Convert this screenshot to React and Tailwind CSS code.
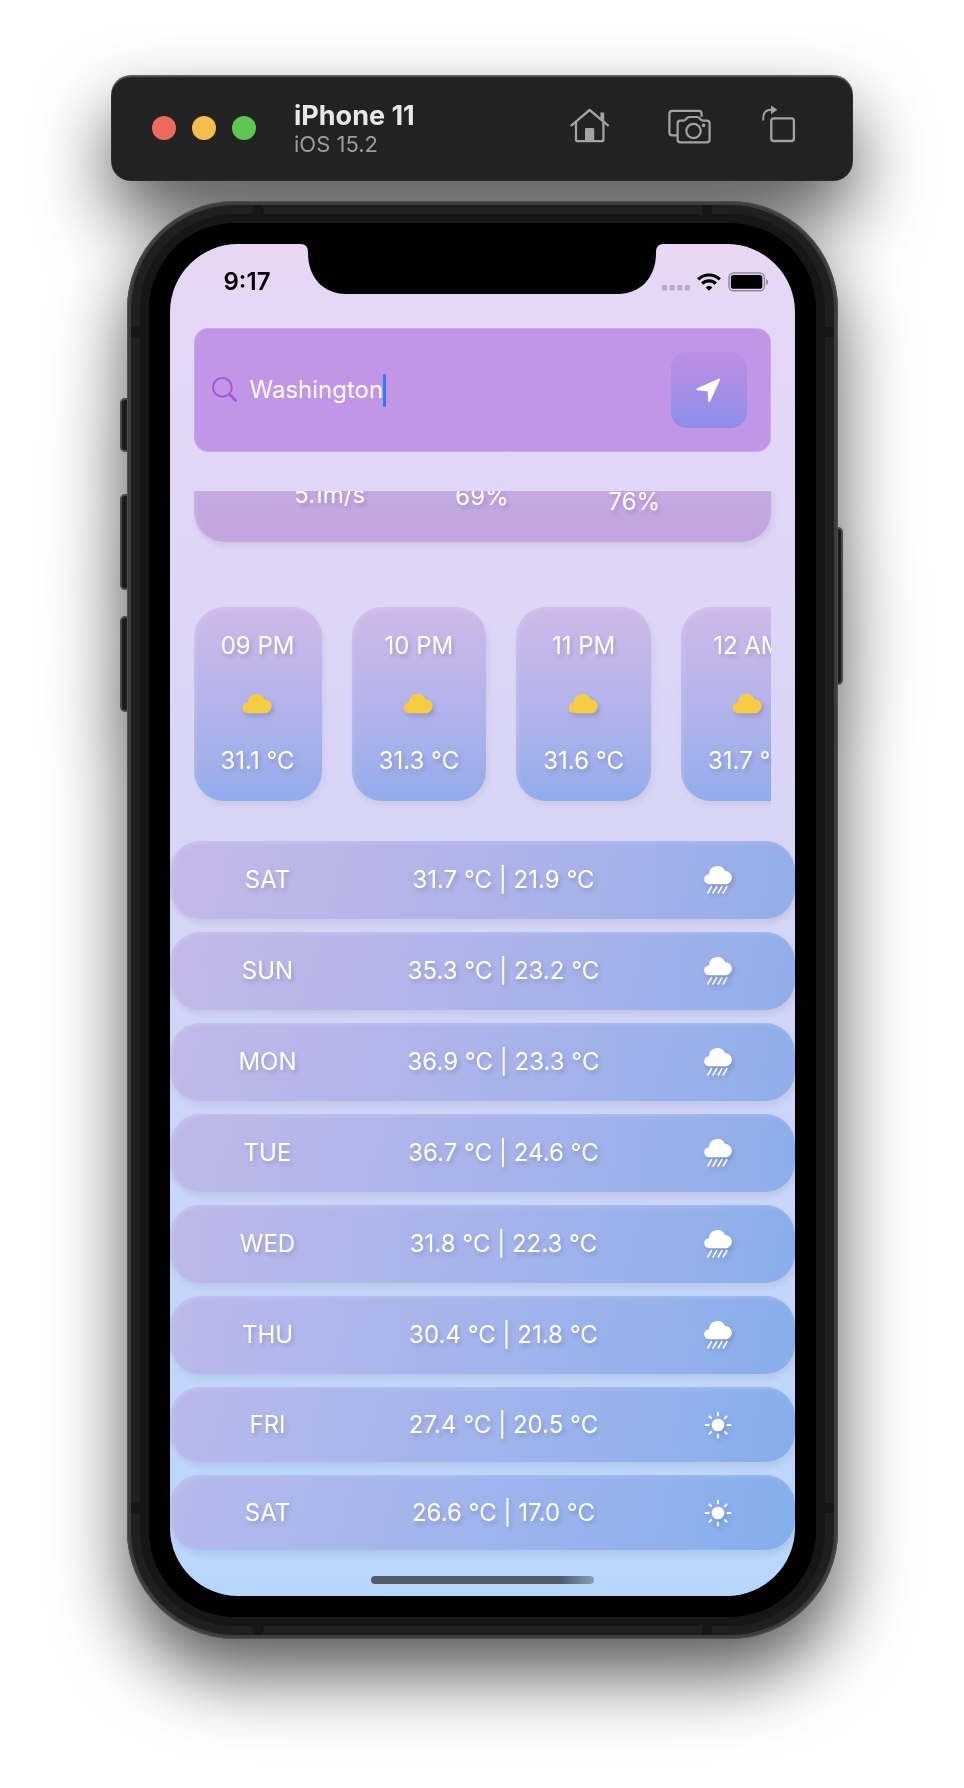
const HOURS = [
  { time: "09 PM", temp: "31.1 °C" },
  { time: "10 PM", temp: "31.3 °C" },
  { time: "11 PM", temp: "31.6 °C" },
  { time: "12 AM", temp: "31.7 °C" },
];

const DAYS = [
  { day: "SAT", high: "31.7 °C", low: "21.9 °C", rain: true },
  { day: "SUN", high: "35.3 °C", low: "23.2 °C", rain: true },
  { day: "MON", high: "36.9 °C", low: "23.3 °C", rain: true },
  { day: "TUE", high: "36.7 °C", low: "24.6 °C", rain: true },
  { day: "WED", high: "31.8 °C", low: "22.3 °C", rain: true },
  { day: "THU", high: "30.4 °C", low: "21.8 °C", rain: true },
  { day: "FRI", high: "27.4 °C", low: "20.5 °C", rain: false },
  { day: "SAT", high: "26.6 °C", low: "17.0 °C", rain: false },
];

const CLOUD =
  "M5.3 20.2A5.3 5.3 0 0 1 4.7 9.6A8.9 8.9 0 0 1 21.6 6.2A7.1 7.1 0 0 1 23.2 20.2Z";

function HomeIcon() {
  return (
    <svg className="block" width="40" height="40" viewBox="0 0 40 40" fill="none" stroke="#a3a3a3" strokeWidth="2.3" strokeLinecap="round" strokeLinejoin="round">
      <path d="M1.5 20.3L19.6 5L38 20.3" />
      <path d="M6 17V34.4Q6 36.2 7.8 36.2H31.6Q33.4 36.2 33.4 34.4V17" />
      <path d="M30.4 14V7.4H34.2V16.8Z" fill="#a3a3a3" stroke="none" />
      <rect x="15" y="23" width="9.2" height="13.5" rx="1" fill="#a3a3a3" stroke="none" />
    </svg>
  );
}

function CameraIcon() {
  return (
    <svg className="block" width="43" height="40" viewBox="0 0 43 40" fill="none" stroke="#a3a3a3" strokeWidth="2.2" strokeLinecap="round" strokeLinejoin="round">
      <path d="M33.6 11V8.6Q33.6 5.8 30.8 5.8H4.2Q1.4 5.8 1.4 8.6V27.6Q1.4 30.4 4.2 30.4H8" />
      <path d="M12.4 15.6H15.4Q16.6 15.6 17.4 14.8L19.4 12.8Q20.2 12 21.4 12H29Q30.2 12 31 12.8L33 14.8Q33.8 15.6 35 15.6H38.8Q41.6 15.6 41.6 18.4V34.6Q41.6 37.4 38.8 37.4H12.4Q9.6 37.4 9.6 34.6V18.4Q9.6 15.6 12.4 15.6Z" />
      <circle cx="25.5" cy="26" r="7.2" />
      <circle cx="35.6" cy="20.4" r="1.8" fill="#a3a3a3" stroke="none" />
    </svg>
  );
}

function RotateIcon() {
  return (
    <svg className="block" width="34" height="40" viewBox="0 0 34 40" fill="none" stroke="#a3a3a3" strokeWidth="2.3" strokeLinejoin="round">
      <path d="M1.2 15.6V13Q1.2 4.7 9.6 4.7" strokeWidth="1.9" />
      <path d="M9 0.4L15.4 4.8L9 9.2Z" fill="#a3a3a3" stroke="none" />
      <rect x="9.3" y="13.4" width="22.6" height="22.6" rx="2.6" />
    </svg>
  );
}

function CloudIcon() {
  return (
    <svg className="block [filter:drop-shadow(2px_3px_2px_rgba(0,0,0,0.15))]" width="30" height="21" viewBox="0 0 30 21" fill="#f6cc45">
      <path d={CLOUD} />
    </svg>
  );
}

function RainIcon() {
  return (
    <svg className="block [filter:drop-shadow(2px_3px_2px_rgba(0,0,0,0.15))]" width="30" height="30" viewBox="-1.5 0 30 30">
      <path d={CLOUD} fill="#fff" transform="scale(0.955)" />
      <path d="M7 21.6L3.3 28M12.2 21.6L8.5 28M17.4 21.6L13.7 28M22.4 21.6L18.7 28" stroke="#fff" strokeWidth="1.5" strokeLinecap="round" />
    </svg>
  );
}

function SunIcon() {
  return (
    <svg className="block [filter:drop-shadow(2px_3px_2px_rgba(0,0,0,0.15))]" width="28" height="28" viewBox="0 0 28 28" fill="#fff" stroke="#fff" strokeWidth="1.9" strokeLinecap="round">
      <circle cx="14" cy="14" r="6.3" stroke="none" />
      <path d="M14 1.6V4.6M14 23.4V26.4M1.6 14H4.6M23.4 14H26.4M5.4 5.4L7.2 7.2M20.8 20.8L22.6 22.6M5.4 22.6L7.2 20.8M20.8 7.2L22.6 5.4" />
    </svg>
  );
}

function Toolbar() {
  return (
    <header className="relative flex w-full max-w-[742px] items-center rounded-[20px] bg-[#222222] py-6 pr-[57px] pl-[41px] shadow-[inset_0_2px_1px_rgba(255,255,255,0.25),inset_0_0_1px_rgba(255,255,255,0.3)]">
      <div className="flex gap-4">
        <button type="button" aria-label="Close" className="size-6 rounded-full bg-[#ed6a5e]" />
        <button type="button" aria-label="Minimize" className="size-6 rounded-full bg-[#f4be4f]" />
        <button type="button" aria-label="Zoom" className="size-6 rounded-full bg-[#61c554]" />
      </div>
      <div className="ml-[38px] flex-1 pt-0.5">
        <h1 className="text-[27px] leading-[30px] font-bold text-[#e8e8e8]">iPhone 11</h1>
        <p className="text-[22px] leading-[26px] text-[#9c9c9c]">iOS 15.2</p>
      </div>
      <div className="flex gap-[51px] pb-1.5">
        <button type="button" aria-label="Home" className="w-[47px]"><HomeIcon /></button>
        <button type="button" aria-label="Screenshot"><CameraIcon /></button>
        <button type="button" aria-label="Rotate"><RotateIcon /></button>
      </div>
    </header>
  );
}

function StatusBar() {
  return (
    <div className="mb-2 flex h-[76px] items-center justify-between pr-[26px] pl-[54px]">
      <span className="text-2xl font-semibold text-black">9:17</span>
      <div className="flex h-5 items-end gap-[7px]">
        <svg className="mb-px block" width="28" height="6" viewBox="0 0 28 6" fill="#b8aac6">
          <rect x="0" width="5" height="5.4" rx="1.2" />
          <rect x="7.6" width="5" height="5.4" rx="1.2" />
          <rect x="15.2" width="5" height="5.4" rx="1.2" />
          <rect x="22.8" width="5" height="5.4" rx="1.2" />
        </svg>
        <svg className="mb-px block" width="24" height="18" viewBox="0 0 24 18" fill="none" stroke="#000" strokeWidth="3.2">
          <path d="M1.2 6.4A15.4 15.4 0 0 1 22.8 6.4" />
          <path d="M5.2 10.6A9.7 9.7 0 0 1 18.8 10.6" />
          <path d="M12 17.8L8.7 14.4A4.8 4.8 0 0 1 15.3 14.4Z" fill="#000" stroke="none" />
        </svg>
        <svg className="block" width="41" height="20" viewBox="0 0 41 20" fill="none">
          <rect x="1" y="1" width="35.4" height="17.8" rx="4.6" stroke="#8f8499" strokeWidth="1.4" />
          <rect x="2.9" y="3" width="31.4" height="13.8" rx="2.6" fill="#000" />
          <path d="M38.2 7V13Q40.2 12 40.2 10Q40.2 8 38.2 7Z" fill="#8f8499" />
        </svg>
      </div>
    </div>
  );
}

function SearchBox() {
  return (
    <div className="mx-6 flex items-center rounded-[14px] border border-[#cba6ea] bg-[#c296e6] py-[23px] pr-[23px] pl-[17px]">
      <svg className="mr-3 block shrink-0" width="26" height="26" viewBox="0 0 26 26" fill="none" stroke="#a557d9" strokeLinecap="round">
        <circle cx="10.4" cy="10.4" r="9.4" strokeWidth="2" />
        <path d="M17.6 17.6L23.6 23.6" strokeWidth="2.8" />
      </svg>
      <input
        aria-label="City"
        defaultValue="Washington"
        className="field-sizing-content min-w-0 bg-transparent text-2xl leading-8 text-white outline-none"
      />
      <span className="h-[33px] w-[3px] shrink-0 rounded-full bg-[#2f7bf6]" />
      <button
        type="button"
        aria-label="Use my location"
        className="ml-auto flex size-[76px] shrink-0 items-center justify-center rounded-[16px] bg-linear-to-b from-[#bd8ee2] to-[#8c8eeb]"
      >
        <svg className="block" width="25" height="25" viewBox="0 0 25 25" fill="#fff" stroke="#fff" strokeWidth="2" strokeLinejoin="round">
          <path d="M23 1.6L1.6 11.2L12.6 12.4L13.2 23Z" />
        </svg>
      </button>
    </div>
  );
}

function SummaryCard() {
  return (
    <div className="mx-6 -mt-6 grid h-[75px] grid-cols-3 items-end rounded-b-[30px] bg-linear-to-b from-[#c5ace3] to-[#c1a4df] px-[60px] text-center shadow-[2px_4px_6px_rgba(0,0,0,0.08),inset_2px_0_4px_rgba(255,255,255,0.15)]">
      <span className="pb-[31px]">5.1m/s</span>
      <span className="pb-[29px]">69%</span>
      <span className="pb-6">76%</span>
    </div>
  );
}

function HourlyForecast() {
  return (
    <ul className="mx-6 mt-[65px] flex gap-[30px] overflow-hidden pb-10">
      {HOURS.map((h) => (
        <li
          key={h.time}
          className="flex shrink-0 flex-col items-center gap-[31px] rounded-[30px] bg-linear-to-b from-[rgba(185,141,212,0.4)] to-[rgba(46,114,220,0.42)] px-[27px] pt-[23px] pb-6 shadow-[2px_4px_6px_rgba(0,0,0,0.06),inset_2px_2px_5px_rgba(255,255,255,0.15)]"
        >
          <span>{h.time}</span>
          <CloudIcon />
          <span>{h.temp}</span>
        </li>
      ))}
    </ul>
  );
}

function DailyForecast() {
  return (
    <ul className="flex flex-col gap-[13px]">
      {DAYS.map((d, i) => (
        <li
          key={i}
          className={
            "grid grid-cols-[196fr_276fr_153fr] items-center justify-items-center rounded-[30px] bg-linear-to-r from-[rgba(171,141,212,0.4)] to-[rgba(46,114,212,0.4)] shadow-[2px_4px_6px_rgba(0,0,0,0.07),inset_2px_2px_5px_rgba(255,255,255,0.15)] " +
            (d.rain ? "h-[78px]" : "h-[75px]")
          }
        >
          <span>{d.day}</span>
          <span>{d.high} | {d.low}</span>
          {d.rain ? <RainIcon /> : <SunIcon />}
        </li>
      ))}
    </ul>
  );
}

function Screen() {
  return (
    <main className="relative overflow-hidden rounded-[68px] bg-linear-to-b from-[#e8d7f5] via-[#d4d5f7] to-[#b8d6fd]">
      <svg className="absolute top-0 left-1/2 block -translate-x-1/2" width="364" height="50" viewBox="0 0 364 50">
        <path d="M0 0C6 0 8 3 8 9C8 34 24 50 46 50H318C340 50 356 34 356 9C356 3 358 0 364 0Z" fill="#000" />
      </svg>
      <StatusBar />
      <SearchBox />
      <div className="mt-[39px] overflow-hidden text-2xl leading-8 text-white [text-shadow:2px_3px_4px_rgba(0,0,0,0.16)]">
        <SummaryCard />
        <HourlyForecast />
        <DailyForecast />
        <div className="mx-auto mt-[26px] mb-3 h-2 w-[223px] rounded-full bg-linear-to-r from-[#4e5c6c] from-85% to-[#8b9fba]" />
      </div>
    </main>
  );
}

function Phone() {
  const key = "absolute w-[10px] border-2 border-[#4a4a4a] bg-[#1b1b1b]";
  const band = "absolute bg-[#161616]";
  return (
    <div className="relative w-full max-w-[711px]">
      <div className={key + " top-[197px] -left-[7px] h-[54px] rounded-l-[5px]"} />
      <div className={key + " top-[293px] -left-[7px] h-[96px] rounded-l-[5px]"} />
      <div className={key + " top-[415px] -left-[7px] h-[96px] rounded-l-[5px]"} />
      <div className={key + " top-[326px] -right-[5px] h-[158px] rounded-r-[5px]"} />
      <div className="relative rounded-[108px] bg-[#3d3d3d] p-1 shadow-[inset_0_0_0_1px_#505050]">
        <div className="relative rounded-[104px] bg-[#1f1f1f] p-[9px]">
          <span className={band + " top-0 left-[122px] h-[9px] w-[10px]"} />
          <span className={band + " top-0 right-[122px] h-[9px] w-[10px]"} />
          <span className={band + " bottom-0 left-[122px] h-[9px] w-[10px]"} />
          <span className={band + " right-[122px] bottom-0 h-[9px] w-[10px]"} />
          <span className={band + " top-[122px] left-0 h-[10px] w-[9px]"} />
          <span className={band + " top-[122px] right-0 h-[10px] w-[9px]"} />
          <span className={band + " bottom-[122px] left-0 h-[10px] w-[9px]"} />
          <span className={band + " right-0 bottom-[122px] h-[10px] w-[9px]"} />
          <div className="rounded-[95px] bg-[#161616] p-[9px]">
            <div className="rounded-[86px] bg-black p-[21px]">
              <Screen />
            </div>
          </div>
        </div>
      </div>
    </div>
  );
}

export default function App() {
  return (
    <div className="min-h-screen overflow-hidden bg-white px-8 pt-[75px] pb-[148px] font-['Inter','Noto_Sans',sans-serif]">
      <div className="flex flex-col items-center gap-5 [filter:drop-shadow(0_36px_36px_rgba(0,0,0,0.65))]">
        <Toolbar />
        <Phone />
      </div>
    </div>
  );
}
